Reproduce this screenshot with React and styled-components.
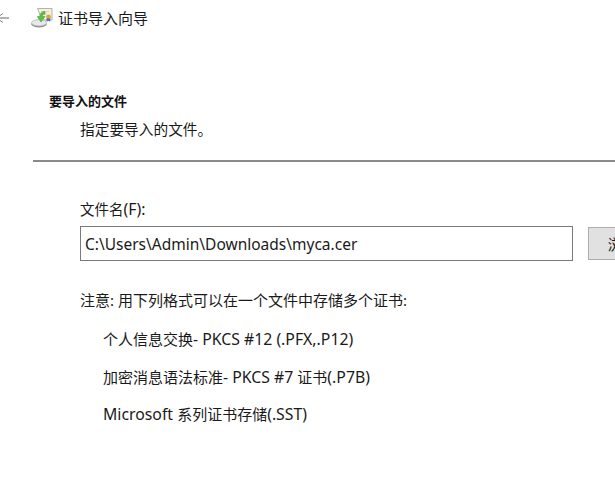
import React from "react";
import styled, { createGlobalStyle } from "styled-components";

const Global = createGlobalStyle`
html, body {
    margin: 0;
    padding: 0;
    background: #fff;
    overflow: hidden;
}
body {
    font-family: "Noto Sans", "Noto Sans CJK SC", sans-serif;
    color: #1a1a1a;
}
`

export default function App() {
    return (
        <Page>
            <Global />
            <TitleBar>
                <BackArrow width="10" height="12" viewBox="0 0 10 12">
                    <path d="M0 6h9" stroke="#666" strokeWidth="1" fill="none" />
                    <path d="M0 3.5L3 1.5M0 8.5L3 10.5" stroke="#888" strokeWidth="1" fill="none" />
                </BackArrow>
                <WizardIcon />
                <Title>证书导入向导</Title>
            </TitleBar>
            <Header>
                <Heading>要导入的文件</Heading>
                <SubHeading>指定要导入的文件。</SubHeading>
            </Header>
            <Rule />
            <Body>
                <FieldLabel>文件名<Latin>(F):</Latin></FieldLabel>
                <FieldRow>
                    <PathInput readOnly value="C:\Users\Admin\Downloads\myca.cer" />
                    <BrowseButton>浏览(R)...</BrowseButton>
                </FieldRow>
                <Note>注意: 用下列格式可以在一个文件中存储多个证书:</Note>
                <FormatList>
                    <FormatItem>个人信息交换<Latin>- PKCS #12 (.PFX,.P12)</Latin></FormatItem>
                    <FormatItem>加密消息语法标准<Latin>- PKCS #7 </Latin>证书<Latin>(.P7B)</Latin></FormatItem>
                    <FormatItem><Latin>Microsoft </Latin>系列证书存储<Latin>(.SST)</Latin></FormatItem>
                </FormatList>
            </Body>
        </Page>
    );
}

function WizardIcon() {
    return (
        <IconSvg width="22" height="20" viewBox="0 0 22 20">
            <path d="M6.5 .5h14.5v11.5h-10z" fill="#f3f0e4" stroke="#b9b29c" strokeWidth="1" />
            <path d="M10 3.5h8M11 6h5" stroke="#d8d3c2" strokeWidth="1" />
            <circle cx="17.5" cy="9" r="2.4" fill="#e3a62b" />
            <path d="M15.6 10.5h3.6v3.2l-1.8-1-1.8 1z" fill="#3f6fc4" />
            <ellipse cx="8" cy="16.2" rx="7.6" ry="3.4" fill="#8f9497" />
            <ellipse cx="8" cy="14.8" rx="7.6" ry="3.2" fill="#e6e8e9" stroke="#a3a7aa" strokeWidth=".6" />
            <path d="M14 3.5C10.5 3.5 8.8 5.5 8.8 8.5H6.2l3.8 5.5 4-5.5h-2.4c0-1.6.8-2.4 2.4-2.4z" fill="#5cc043" stroke="#3f9a2d" strokeWidth=".5" />
        </IconSvg>
    );
}

const Page = styled.div`
width: 615px;
height: 490px;
overflow: hidden;
background: #fff;
`
const TitleBar = styled.div`
display: flex;
align-items: center;
height: 36px;
`
const BackArrow = styled.svg`
flex: none;
margin-right: 21px;
`
const IconSvg = styled.svg`
flex: none;
margin-right: 5px;
`
const Title = styled.div`
font-size: 15px;
line-height: 20px;
color: #1a1a1a;
`
const Latin = styled.span`
font-size: 15.8px;
`
const Header = styled.div`
padding: 56px 0 0 49px;
`
const Heading = styled.div`
font-size: 13px;
line-height: 18px;
font-weight: bold;
color: #111;
`
const SubHeading = styled.div`
font-size: 14.7px;
line-height: 20px;
margin: 9px 0 0 31px;
`
const Rule = styled.div`
height: 2px;
margin: 21px 0 0 33px;
background: #8a8a8a;
`
const Body = styled.div`
padding: 37px 0 0 80px;
`
const FieldLabel = styled.div`
font-size: 14.5px;
line-height: 20px;
`
const FieldRow = styled.div`
display: flex;
align-items: center;
margin-top: 7px;
width: 620px;
`
const PathInput = styled.input`
box-sizing: border-box;
flex: none;
width: 493px;
height: 35px;
padding: 0 4px;
border: 1px solid #7a7a7a;
border-radius: 0;
outline: none;
font: 15.5px "Noto Sans", "Noto Sans CJK SC", sans-serif;
color: #1a1a1a;
background: #fff;
`
const BrowseButton = styled.button`
box-sizing: border-box;
flex: none;
width: 100px;
height: 33px;
margin-left: 15px;
border: 1px solid #adadad;
border-radius: 0;
background: #e1e1e1;
font: 15px "Noto Sans", "Noto Sans CJK SC", sans-serif;
color: #1a1a1a;
`
const Note = styled.div`
font-size: 15px;
line-height: 20px;
margin-top: 29px;
`
const FormatList = styled.div`
display: flex;
flex-direction: column;
gap: 17.5px;
margin: 19px 0 0 23px;
`
const FormatItem = styled.div`
font-size: 15px;
line-height: 20px;
`
